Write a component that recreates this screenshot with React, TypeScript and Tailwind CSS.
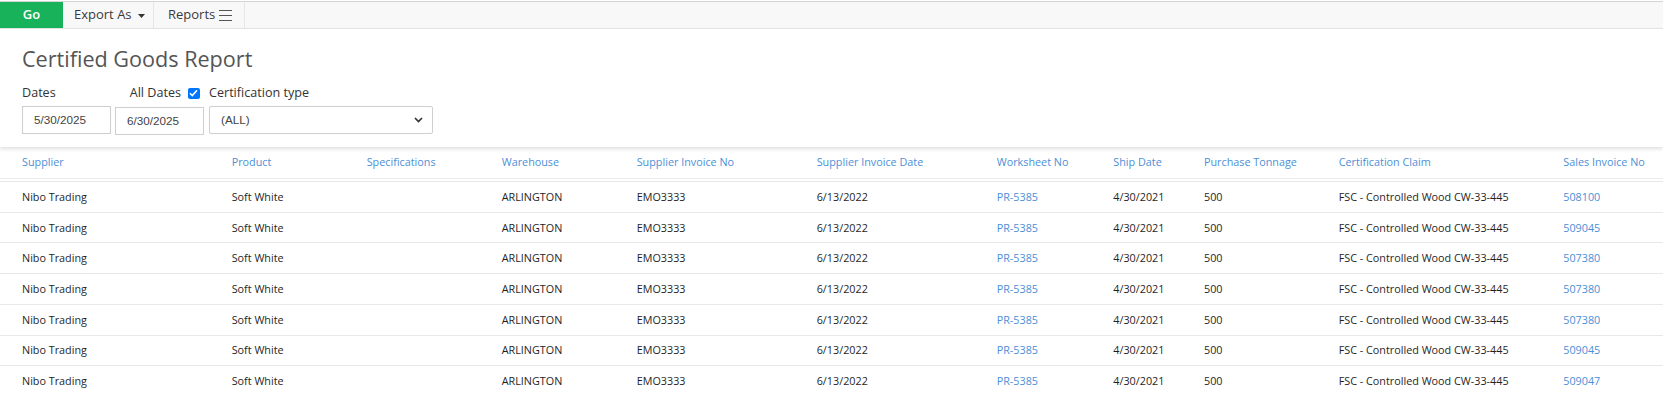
import React from "react";

const rows = ["508100", "509045", "507380", "507380", "507380", "509045", "509047"];

const columns = [
  "Supplier",
  "Product",
  "Specifications",
  "Warehouse",
  "Supplier Invoice No",
  "Supplier Invoice Date",
  "Worksheet No",
  "Ship Date",
  "Purchase Tonnage",
  "Certification Claim",
  "Sales Invoice No",
];

const gridCols =
  "grid grid-cols-[209.7px_135px_135px_135px_180px_180px_116.6px_90.7px_134.7px_224.6px_1fr] items-center";

function Toolbar() {
  return (
    <div className="mt-px flex h-[28px] border-t border-b border-t-[#d4d4d4] border-b-[#e6e6e6] bg-[#f8f8f8] text-[13px] text-[#3a3a3a]">
      <button className="flex w-[63px] items-center justify-center bg-[#18b25a] font-semibold text-white">
        Go
      </button>
      <button className="flex w-[91px] items-center border-r border-[#e6e6e6] pl-[11px]">
        Export As
        <svg width="7" height="4" viewBox="0 0 7 4" className="ml-[6px] mt-[1px]">
          <path d="M0 0h7L3.5 4z" fill="#333" />
        </svg>
      </button>
      <button className="flex w-[91px] items-center border-r border-[#e6e6e6] pl-[14px]">
        Reports
        <svg width="15" height="11" viewBox="0 0 15 11" className="ml-[3px]">
          <path d="M1 0.5h13M1 5.5h13M1 10.5h13" stroke="#555" strokeWidth="1" />
        </svg>
      </button>
    </div>
  );
}

function Filters() {
  return (
    <div className="relative z-10 bg-white px-[22px] pt-[14.6px] pb-[12px] shadow-[0_2px_4px_rgba(0,0,0,0.13)]">
      <h1 className="text-[21.6px] leading-[1.362] text-[#555]">Certified Goods Report</h1>
      <div className="mt-[10px] flex text-[12.6px] text-[#333]">
        <div className="w-[89.4px]">
          <div className="h-[23px] pt-[1px] leading-[17px]">Dates</div>
          <div className="flex h-[28.4px] items-center border border-[#cfcfcf] px-[11px] font-['Liberation_Sans',sans-serif] text-[11.7px] text-[#444]">
            5/30/2025
          </div>
        </div>
        <div className="ml-[3.6px] w-[89px]">
          <div className="flex h-[23px] items-start justify-end pt-[1px] pr-[4.3px] leading-[17px]">
            All Dates
            <span className="ml-[7px] mt-[3.5px] flex h-[11.7px] w-[11.7px] items-center justify-center rounded-[2px] bg-[#0075ff]">
              <svg width="9" height="8" viewBox="0 0 9 8">
                <path d="M1 4.2l2.3 2.3L8 1.2" stroke="white" strokeWidth="1.6" fill="none" />
              </svg>
            </span>
          </div>
          <div className="mt-px flex h-[28.4px] items-center border border-[#cfcfcf] px-[11px] font-['Liberation_Sans',sans-serif] text-[11.7px] text-[#444]">
            6/30/2025
          </div>
        </div>
        <div className="ml-[5px] w-[224.4px]">
          <div className="h-[23px] pt-[1px] leading-[17px]">Certification type</div>
          <div className="flex h-[28.4px] items-center justify-between rounded-[2px] border border-[#cfcfcf] pl-[11px] pr-[9px] font-['Liberation_Sans',sans-serif] text-[11.7px] text-[#444]">
            (ALL)
            <svg width="9" height="6" viewBox="0 0 9 6">
              <path d="M1 1l3.5 3.5L8 1" stroke="#333" strokeWidth="1.7" fill="none" />
            </svg>
          </div>
        </div>
      </div>
    </div>
  );
}

function ReportTable() {
  return (
    <div className="text-[10.8px]">
      <div className="h-[31.3px] border-b border-[#ececec] pl-[22px]">
        <div className={`${gridCols} h-full text-[#4d8fd6]`}>
          {columns.map((c) => (
            <div key={c}>{c}</div>
          ))}
        </div>
      </div>
      <div className="mt-[2.4px] border-t border-[#e8e8e8]">
        {rows.map((inv, i) => (
          <div key={i} className="h-[30.7px] border-b border-[#e8e8e8] pl-[22px]">
            <div className={`${gridCols} h-full text-[#1f1f1f]`}>
              <div>Nibo Trading</div>
              <div>Soft White</div>
              <div></div>
              <div>ARLINGTON</div>
              <div>EMO3333</div>
              <div>6/13/2022</div>
              <div className="text-[#4a8fd8]">PR-5385</div>
              <div>4/30/2021</div>
              <div>500</div>
              <div>FSC - Controlled Wood CW-33-445</div>
              <div className="text-[#4a8fd8]">{inv}</div>
            </div>
          </div>
        ))}
      </div>
    </div>
  );
}

export default function App() {
  return (
    <div className="h-[396px] w-full overflow-hidden bg-white font-['Open_Sans',sans-serif]">
      <Toolbar />
      <Filters />
      <ReportTable />
    </div>
  );
}
